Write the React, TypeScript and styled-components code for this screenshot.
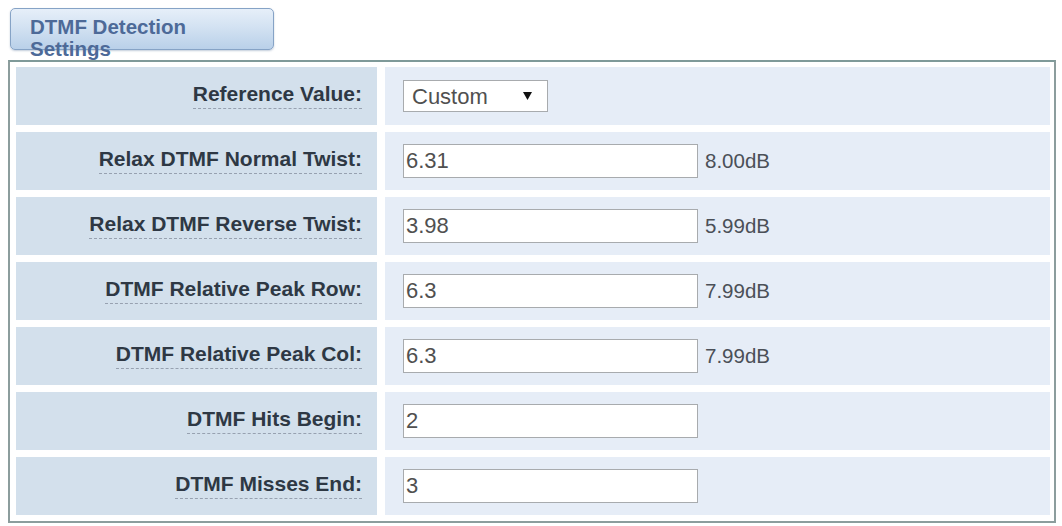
import React from "react";
import styled, { createGlobalStyle } from "styled-components";

const Global = createGlobalStyle`
  html, body { margin: 0; padding: 0; background: #ffffff; }
  body { padding: 8px; font-family: "Liberation Sans", Arial, sans-serif; }
`;

const Page = styled.div`
  display: flex;
  flex-direction: column;
  width: 1048px;
`;

const TabButton = styled.div`
  box-sizing: border-box;
  margin-left: 2px;
  width: 264px;
  height: 42px;
  padding: 7px 20px 0 19px;
  border: 1px solid #86a3c6;
  border-radius: 5px;
  background: linear-gradient(to bottom, #e6eff9 0%, #d3e2f2 45%, #b9d0e9 100%);
  box-shadow: 0 1px 2px rgba(80, 110, 150, 0.35);
  color: #4d6a98;
  font-weight: bold;
  font-size: 20.5px;
  line-height: 22px;
  overflow: visible;
`;

const Box = styled.div`
  box-sizing: border-box;
  margin-top: 10px;
  width: 1048px;
  border: 2px solid #8c9d9d;
  border-top-color: #7f9a99;
  padding: 5px 4px 6px 6px;
  display: flex;
  flex-direction: column;
  gap: 7px;
  background: #ffffff;
`;

const Row = styled.div`
  display: grid;
  grid-template-columns: 361px 1fr;
  column-gap: 8px;
  height: 58px;
`;

const LabelCell = styled.div`
  background: #d3e0ec;
  display: flex;
  align-items: center;
  justify-content: flex-end;
  padding-right: 15px;
`;

const LabelText = styled.span`
  font-weight: bold;
  font-size: 21px;
  line-height: 22px;
  color: #2e3844;
  padding-bottom: 3px;
  border-bottom: 1px dashed #97a1b0;
`;

const ValueCell = styled.div`
  background: #e6edf7;
  display: flex;
  align-items: center;
  padding-left: 18px;
  gap: 7px;
`;

const TextInput = styled.input`
  box-sizing: border-box;
  width: 295px;
  height: 34px;
  border: 1px solid #a8abae;
  background: #ffffff;
  padding: 0 2px;
  font-family: "Liberation Sans", Arial, sans-serif;
  font-size: 22px;
  color: #505050;
  outline: none;
`;

const SelectWrap = styled.div`
  position: relative;
  width: 145px;
  height: 32px;
`;

const Select = styled.select`
  box-sizing: border-box;
  appearance: none;
  -webkit-appearance: none;
  width: 145px;
  height: 32px;
  border: 1px solid #a8abae;
  background: #ffffff;
  padding: 0 0 0 8px;
  font-family: "Liberation Sans", Arial, sans-serif;
  font-size: 22px;
  color: #505050;
  outline: none;
`;

const Arrow = styled.svg`
  position: absolute;
  right: 16px;
  top: 12px;
  pointer-events: none;
`;

const Unit = styled.span`
  font-size: 20.5px;
  color: #4b5058;
`;

type Field = {
  label: string;
  value: string;
  unit?: string;
  select?: boolean;
};

const fields: Field[] = [
  { label: "Reference Value:", value: "Custom", select: true },
  { label: "Relax DTMF Normal Twist:", value: "6.31", unit: "8.00dB" },
  { label: "Relax DTMF Reverse Twist:", value: "3.98", unit: "5.99dB" },
  { label: "DTMF Relative Peak Row:", value: "6.3", unit: "7.99dB" },
  { label: "DTMF Relative Peak Col:", value: "6.3", unit: "7.99dB" },
  { label: "DTMF Hits Begin:", value: "2" },
  { label: "DTMF Misses End:", value: "3" },
];

export default function App() {
  return (
    <>
      <Global />
      <Page>
        <TabButton>DTMF Detection Settings</TabButton>
        <Box>
          {fields.map((f) => (
            <Row key={f.label}>
              <LabelCell>
                <LabelText>{f.label}</LabelText>
              </LabelCell>
              <ValueCell>
                {f.select ? (
                  <SelectWrap>
                    <Select defaultValue={f.value}>
                      <option>Custom</option>
                      <option>Default</option>
                    </Select>
                    <Arrow width="9" height="8" viewBox="0 0 9 8">
                      <path d="M0 0 L9 0 L4.5 8 Z" fill="#111" />
                    </Arrow>
                  </SelectWrap>
                ) : (
                  <TextInput defaultValue={f.value} />
                )}
                {f.unit && <Unit>{f.unit}</Unit>}
              </ValueCell>
            </Row>
          ))}
        </Box>
      </Page>
    </>
  );
}
